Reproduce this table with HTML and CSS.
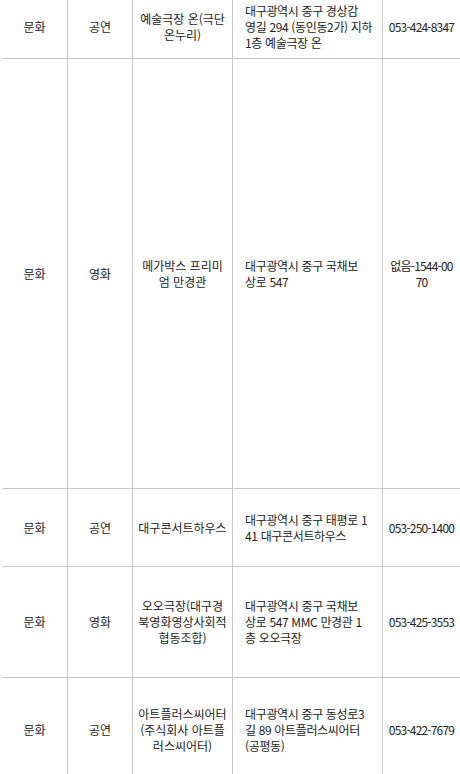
FILE: index.html
```html
<!DOCTYPE html>
<html lang="ko">
<head>
<meta charset="utf-8">
<title>문화시설 목록</title>
<link rel="stylesheet" href="styles.css">
</head>
<body>
<div class="list">
  <div class="row r1">
    <div class="c c1"><span>문화</span></div>
    <div class="c c2"><span>공연</span></div>
    <div class="c c3"><span>예술극장 온(극단<br>온누리)</span></div>
    <div class="c c4"><span>대구광역시 중구 경상감<br>영길 294 (동인동2가) 지하<br>1층 예술극장 온</span></div>
    <div class="c c5"><span>053-424-8347</span></div>
  </div>
  <div class="row r2">
    <div class="c c1"><span>문화</span></div>
    <div class="c c2"><span>영화</span></div>
    <div class="c c3"><span>메가박스 프리미<br>엄 만경관</span></div>
    <div class="c c4"><span>대구광역시 중구 국채보<br>상로 547</span></div>
    <div class="c c5"><span>없음-1544-00<br>70</span></div>
  </div>
  <div class="row r3">
    <div class="c c1"><span>문화</span></div>
    <div class="c c2"><span>공연</span></div>
    <div class="c c3"><span>대구콘서트하우스</span></div>
    <div class="c c4"><span>대구광역시 중구 태평로 1<br>41 대구콘서트하우스</span></div>
    <div class="c c5"><span>053-250-1400</span></div>
  </div>
  <div class="row r4">
    <div class="c c1"><span>문화</span></div>
    <div class="c c2"><span>영화</span></div>
    <div class="c c3"><span>오오극장(대구경<br>북영화영상사회적<br>협동조합)</span></div>
    <div class="c c4"><span>대구광역시 중구 국채보<br>상로 547 MMC 만경관 1<br>층 오오극장</span></div>
    <div class="c c5"><span>053-425-3553</span></div>
  </div>
  <div class="row r5">
    <div class="c c1"><span>문화</span></div>
    <div class="c c2"><span>공연</span></div>
    <div class="c c3"><span>아트플러스씨어터<br>(주식회사 아트플<br>러스씨어터)</span></div>
    <div class="c c4"><span>대구광역시 중구 동성로3<br>길 89 아트플러스씨어터<br>(공평동)</span></div>
    <div class="c c5"><span>053-422-7679</span></div>
  </div>
</div>
</body>
</html>
```
FILE: styles.css
```css
html, body {
  margin: 0;
  padding: 0;
  background: #ffffff;
  overflow: hidden;
}

body {
  font-family: "Noto Sans CJK KR", sans-serif;
  font-size: 12px;
  line-height: 16px;
  color: #222222;
}

.list {
  margin: -4px 0 0 2px;
  width: 458px;
}

.row {
  display: grid;
  grid-template-columns: 65px 65px 100px 150px 78px;
  border-bottom: 1px solid #c8c8c8;
  box-sizing: border-box;
}

.r1 { height: 63px; }
.r2 { height: 430px; }
.r3 { height: 78px; }
.r4 { height: 111px; }
.r5 { height: 104px; }

.c {
  display: flex;
  align-items: center;
  justify-content: center;
  text-align: center;
  border-left: 1px solid #c8c8c8;
  padding: 0 4px;
  min-width: 0;
}

.c span {
  white-space: nowrap;
}

.c1 {
  border-left: none;
}

.c4 {
  justify-content: flex-start;
  text-align: left;
  padding-left: 12px;
  letter-spacing: -0.35px;
}

.c5 {
  letter-spacing: -0.8px;
}
```
